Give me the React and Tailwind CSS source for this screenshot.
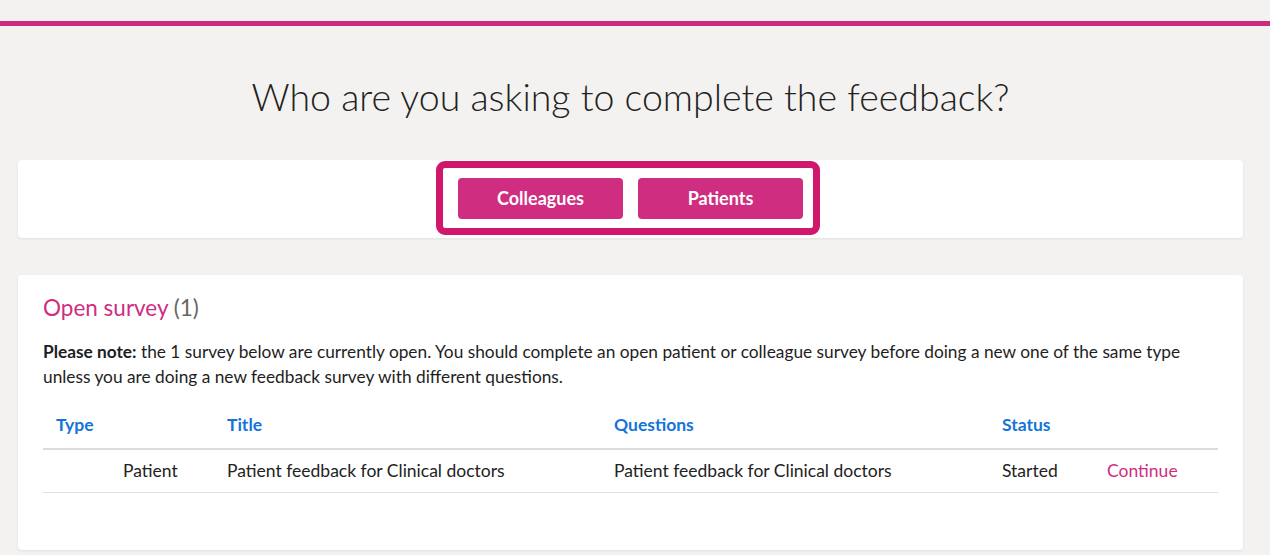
import React from 'react';

const rows = [
  { type: 'Patient', title: 'Patient feedback for Clinical doctors', questions: 'Patient feedback for Clinical doctors', status: 'Started' }
];

const App = () => {
  return (
    <div className="min-h-[555px] bg-[#f3f2f0] text-[#222] font-['Lato','Liberation_Sans',sans-serif]">
      <div className="h-[21px]" />
      <div className="h-[5px] bg-[#cf2a81]" />

      <div className="pr-[9px]">
        <h1 className="pt-[47px] pb-[39px] text-center text-[37.5px] leading-[48px] font-light text-[#222]">
          Who are you asking to complete the feedback?
        </h1>

        <div className="mx-[18px] flex justify-center rounded bg-white pt-[1px] pb-[3px] shadow-[0_1px_3px_rgba(0,0,0,0.08)]">
          <div className="ml-[-5px] flex gap-[15px] rounded-[9px] border-[7px] border-[#d0176b] pl-[15px] pr-[10px] pt-[10px] pb-[9px]">
            <button className="h-[41px] w-[165px] rounded bg-[#cf2d80] text-[18px] font-bold text-white">Colleagues</button>
            <button className="h-[41px] w-[165px] rounded bg-[#cf2d80] text-[18px] font-bold text-white">Patients</button>
          </div>
        </div>

        <div className="mx-[18px] mt-[37px] h-[275px] rounded bg-white px-[25px] pt-[18px] shadow-[0_1px_3px_rgba(0,0,0,0.08)]">
          <h2 className="text-[22.5px] leading-[30px] text-[#cf2d80]">
            Open survey <span className="text-[#666]">(1)</span>
          </h2>
          <p className="mt-[16px] text-[17.3px] leading-[25px] text-[#1e1e1e]">
            <strong className="font-bold">Please note:</strong> the 1 survey below are currently open. You should complete an open patient or colleague survey before doing a new one of the same type unless you are doing a new feedback survey with different questions.
          </p>

          <table className="mt-[23px] w-full border-collapse text-left">
            <thead>
              <tr className="border-b-2 border-[#dcdcd6]">
                <th className="w-[171px] px-[13px] pb-[10px] text-[17.5px] font-bold text-[#1474d8]">Type</th>
                <th className="w-[387px] px-[13px] pb-[10px] text-[17.5px] font-bold text-[#1474d8]">Title</th>
                <th className="w-[388px] px-[13px] pb-[10px] text-[17.5px] font-bold text-[#1474d8]">Questions</th>
                <th className="w-[105px] px-[13px] pb-[10px] text-[17.5px] font-bold text-[#1474d8]">Status</th>
                <th className="px-[13px] pb-[10px]"></th>
              </tr>
            </thead>
            <tbody>
              {rows.map((row, i) => (
                <tr key={i} className="border-b border-[#e2e2e0]">
                  <td className="pl-[80px] pr-[13px] py-[9px] text-[17.5px] leading-[24px]">{row.type}</td>
                  <td className="px-[13px] py-[9px] text-[17.5px] leading-[24px]">{row.title}</td>
                  <td className="px-[13px] py-[9px] text-[17.5px] leading-[24px]">{row.questions}</td>
                  <td className="px-[13px] py-[9px] text-[17.5px] leading-[24px]">{row.status}</td>
                  <td className="px-[13px] py-[9px] text-[17.5px] leading-[24px] text-[#cf2d80]">Continue</td>
                </tr>
              ))}
            </tbody>
          </table>
        </div>
      </div>
    </div>
  );
};

export default App;
